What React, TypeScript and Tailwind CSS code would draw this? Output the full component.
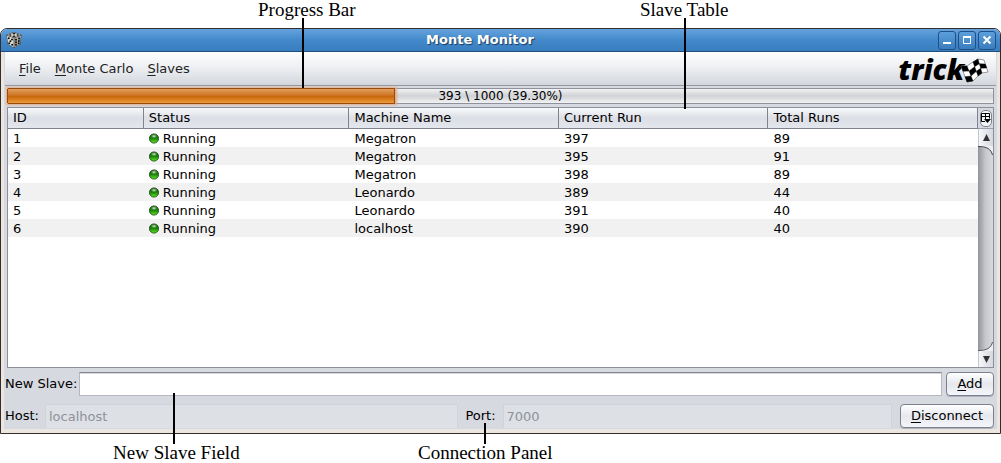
import React from "react";

type Slave = { id: number; status: string; machine: string; current: number; total: number };

const slaves: Slave[] = [
  { id: 1, status: "Running", machine: "Megatron", current: 397, total: 89 },
  { id: 2, status: "Running", machine: "Megatron", current: 395, total: 91 },
  { id: 3, status: "Running", machine: "Megatron", current: 398, total: 89 },
  { id: 4, status: "Running", machine: "Leonardo", current: 389, total: 44 },
  { id: 5, status: "Running", machine: "Leonardo", current: 391, total: 40 },
  { id: 6, status: "Running", machine: "localhost", current: 390, total: 40 },
];

const columns = [
  { name: "ID", width: "w-[14%]" },
  { name: "Status", width: "w-[21.2%]" },
  { name: "Machine Name", width: "w-[21.6%]" },
  { name: "Current Run", width: "w-[21.6%]" },
  { name: "Total Runs", width: "w-[21.6%]" },
];

function Mnemonic({ text }: { text: string }) {
  return (
    <>
      <span className="underline underline-offset-2">{text[0]}</span>
      {text.slice(1)}
    </>
  );
}

function DiceIcon() {
  return (
    <svg viewBox="0 0 16 16" className="h-4 w-4" aria-hidden="true">
      <path d="M0.500 2.800 8 0l7.500 2.800L14.500 12 8 16l-6.500-4z" fill="#33332f" />
      <path d="m1 3 7-2.500L15 3 8 5.500z" fill="#e4e4de" />
      <path d="m1 3.800 6.600 2.300V15.500L2 12z" fill="#deded6" />
      <path d="M15 3.800 8.400 6.100v9.400L14 12z" fill="#aeada5" />
      <g fill="#0c0c0c">
        <ellipse cx="8" cy="1.700" rx="1.600" ry="0.800" />
        <ellipse cx="8" cy="4.200" rx="1.600" ry="0.800" />
        <ellipse cx="4.300" cy="3" rx="1.300" ry="0.700" />
        <ellipse cx="11.700" cy="3" rx="1.300" ry="0.700" />
        <circle cx="2.800" cy="6.300" r="1" />
        <circle cx="6" cy="7.600" r="1" />
        <circle cx="4.400" cy="9.300" r="1" />
        <circle cx="3.200" cy="11.300" r="1" />
        <circle cx="6.100" cy="12.800" r="1" />
        <circle cx="10" cy="7.700" r="1" />
        <circle cx="13.100" cy="6.400" r="1" />
        <circle cx="10" cy="10.200" r="1" />
        <circle cx="12.900" cy="8.900" r="1" />
        <circle cx="10" cy="12.800" r="1" />
        <circle cx="12.700" cy="11.300" r="1" />
      </g>
    </svg>
  );
}

const flagTop = [[1, 8], [7, 8], [13, 4], [18, 1], [24, 2]];
const flagBottom = [[7, 24], [13, 23], [18, 18], [22, 15], [28, 14]];

function flagPoint(column: number, row: number) {
  const [x1, y1] = flagTop[column];
  const [x2, y2] = flagBottom[column];
  return `${x1 + ((x2 - x1) * row) / 3},${y1 + ((y2 - y1) * row) / 3}`;
}

function CheckeredFlag() {
  const cells = [0, 1, 2, 3].flatMap((column) => [0, 1, 2].map((row) => [column, row]));
  return (
    <svg viewBox="0 0 29 26" className="-ml-1 mt-1 h-[26px] w-[29px]" aria-hidden="true">
      <polygon
        points={[...flagTop, ...[...flagBottom].reverse()].map((point) => point.join(",")).join(" ")}
        fill="#fff"
        stroke="#999"
        strokeWidth="1"
        strokeLinejoin="round"
      />
      {cells
        .filter(([column, row]) => (column + row) % 2 === 0)
        .map(([column, row]) => (
          <polygon
            key={`${column}-${row}`}
            points={[
              flagPoint(column, row),
              flagPoint(column + 1, row),
              flagPoint(column + 1, row + 1),
              flagPoint(column, row + 1),
            ].join(" ")}
            stroke="#000"
            strokeWidth="0.400"
          />
        ))}
    </svg>
  );
}

function StatusLight() {
  return (
    <svg viewBox="0 0 10 11" className="h-[11px] w-[10px]" aria-hidden="true">
      <defs>
        <linearGradient id="light" x1="0" y1="0" x2="0" y2="1">
          <stop offset="0" stopColor="#2c6a24" />
          <stop offset="0.450" stopColor="#1a7a0a" />
          <stop offset="1" stopColor="#5cf020" />
        </linearGradient>
        <radialGradient id="glow">
          <stop offset="0" stopColor="#e4f6de" />
          <stop offset="1" stopColor="#6fb060" stopOpacity="0" />
        </radialGradient>
      </defs>
      <circle cx="5" cy="5.500" r="4.600" fill="url(#light)" stroke="#0f3d09" strokeWidth="0.800" />
      <ellipse cx="5" cy="3.200" rx="3.400" ry="2.200" fill="url(#glow)" />
    </svg>
  );
}

function TitleButton({ label, children }: { label: string; children: React.ReactNode }) {
  return (
    <button
      type="button"
      aria-label={label}
      className="flex h-[19px] w-[18px] items-center justify-center rounded-[3px] border border-[#1f4f85] bg-linear-to-b from-[#5c9fdc] to-[#3a7dbf]"
    >
      <svg viewBox="0 0 10 10" className="h-[10px] w-[10px]" fill="none" stroke="#fff" aria-hidden="true">
        {children}
      </svg>
    </button>
  );
}

const pushButton =
  "h-6 rounded-[4px] border border-[#7d818c] bg-linear-to-b from-white via-[#e6e8ee] to-[#f4f6fb] text-[13px] leading-4 shadow-[0_1px_0_#aeb2bc]";

const disabledField =
  "h-6 min-w-0 border border-[#d0d4da] border-b-[#dfe2e7] bg-[#dde0e5] px-[3px] text-[13px] text-[#8f9298]";

const cell = "px-[5px] pt-px pb-0 leading-[17px]";

function Callout({ label, place, line }: { label: string; place: string; line: string }) {
  return (
    <>
      <span className={`absolute font-['Liberation_Serif','Noto_Serif',serif] text-[19px] leading-5 whitespace-nowrap ${place}`}>
        {label}
      </span>
      <span className={`absolute w-0.5 bg-black ${line}`} />
    </>
  );
}

export default function App() {
  const done = 393;
  const runs = 1000;
  const percent = (done / runs) * 100;

  return (
    <div className="relative bg-white pt-7 pb-[29px] font-['DejaVu_Sans',sans-serif] text-[13px] text-black">
      <main className="overflow-hidden rounded-t-[7px] border border-[#332d2c] bg-[#ebe6df]">
        <header className="flex h-[23px] items-center border-b border-[#204e7e] bg-linear-to-b from-[#65a3dc] via-[#4389cb] to-[#397ebe] pr-1 pl-[5px]">
          <DiceIcon />
          <h1 className="flex-1 text-center text-[13px] leading-5 font-bold text-white [text-shadow:1px_1px_1px_#173b63]">
            Monte Monitor
          </h1>
          <div className="flex gap-0.5">
            <TitleButton label="Minimize">
              <path d="M1 8h8" strokeWidth="2" />
            </TitleButton>
            <TitleButton label="Maximize">
              <path d="M1.500 2.500h7v6h-7z" />
              <path d="M1 2h8" strokeWidth="2" />
            </TitleButton>
            <TitleButton label="Close">
              <path d="m1.500 1.500 7 7m0-7-7 7" strokeWidth="2" />
            </TitleButton>
          </div>
        </header>

        <div className="mx-[3px] mb-1 bg-[#d6d9e0] px-px pb-px">
          <div className="flex h-[34px] items-center justify-between border-b border-[#9297a1] bg-linear-to-b from-white via-[#eceef1] to-[#d3d6dd] pl-3.5">
            <nav className="flex gap-3.5 text-[#222]">
              {["File", "Monte Carlo", "Slaves"].map((item) => (
                <button key={item} type="button">
                  <Mnemonic text={item} />
                </button>
              ))}
            </nav>
            <div className="flex items-center pr-[7px]">
              <span className="font-['Open_Sans',sans-serif] text-[28px] leading-6 font-extrabold italic">trick</span>
              <CheckeredFlag />
            </div>
          </div>

          <div
            role="progressbar"
            aria-label="Progress"
            aria-valuenow={done}
            aria-valuemax={runs}
            className="relative mx-0.5 mt-0.5 h-4 border border-[#8e929c] bg-linear-to-b from-[#f2f2f4] via-[#d0d2d6] to-[#f2f2f3]"
          >
            <div
              className="h-full border-r border-[#994a0c] bg-linear-to-b from-[#e0a05a] from-0% via-[#c9680a] via-55% to-[#ee9b38] shadow-[-1px_0_0_#994a0c,0_-1px_0_#994a0c,0_1px_0_#994a0c,0_0_2px_2px_#dfad8b]"
              style={{ width: `${percent}%` }}
            />
            <span className="absolute inset-0 text-center text-[12px] leading-[14px]">
              {done} \ {runs} ({percent.toFixed(2)}%)
            </span>
          </div>

          <section className="mx-0.5 mt-[3px] flex border border-[#8b909b] bg-white">
            <div className="min-h-[259px] min-w-0 flex-1">
              <table className="w-full table-fixed border-separate border-spacing-0 text-left">
                <thead>
                  <tr className="h-[21px]">
                    {columns.map((column) => (
                      <th
                        key={column.name}
                        scope="col"
                        className={`${column.width} border-r border-b border-[#7e838e] bg-linear-to-b from-[#f8f9fb] via-[#dcdfe5] to-[#e3e6ec] px-[5px] py-0 leading-4 font-normal`}
                      >
                        {column.name}
                      </th>
                    ))}
                  </tr>
                </thead>
                <tbody>
                  {slaves.map((slave) => (
                    <tr key={slave.id} className="h-[18px] even:bg-[#f1f1f1]">
                      <td className={cell}>{slave.id}</td>
                      <td className={cell}>
                        <span className="flex items-center gap-1">
                          <StatusLight />
                          {slave.status}
                        </span>
                      </td>
                      <td className={cell}>{slave.machine}</td>
                      <td className={cell}>{slave.current}</td>
                      <td className={cell}>{slave.total}</td>
                    </tr>
                  ))}
                </tbody>
              </table>
            </div>
            <div className="flex w-[15px] flex-col bg-[#d6d9e0]">
              <div className="flex h-[21px] items-center justify-center border-b border-[#9ca1ab]">
                <button type="button" aria-label="Choose columns" className="flex h-[17px] w-[12px] items-center justify-center rounded-[5px] border border-[#7d818c] bg-[#f4f5f8]">
                  <svg viewBox="0 0 11 12" className="h-3 w-[11px] shrink-0" fill="none" stroke="#000" aria-hidden="true">
                    <path d="M5 9.500H1.500v-8h8v5M1 4.500h9M5.500 1v6" />
                    <path d="M4 7h7l-3.500 4z" fill="#000" stroke="none" />
                  </svg>
                </button>
              </div>
              <button type="button" aria-label="Scroll up" className="flex h-[17px] items-center justify-center border-l border-[#c3c6cc] bg-linear-to-r from-[#f6f7f9] to-[#d5d8de]">
                <svg viewBox="0 0 7 7" className="h-[7px] w-[7px]" aria-hidden="true"><path d="M3.500 0 7 7H0z" fill="#333" /></svg>
              </button>
              <div className="relative flex-1 bg-linear-to-r from-[#92949b] via-[#c5c7cc] to-[#d8dade]">
                <svg viewBox="0 0 15 9" className="absolute top-0 h-[9px] w-full" aria-hidden="true">
                  <path d="M0 0h15v9C13 3 9 1 0 1z" fill="#edeff2" />
                  <path d="M0 .5C9 .5 13 3 14.500 9" fill="none" stroke="#3f4146" />
                </svg>
                <svg viewBox="0 0 15 9" className="absolute bottom-0 h-[9px] w-full" aria-hidden="true">
                  <path d="M0 9h15V0C13 6 9 8 0 8z" fill="#edeff2" />
                  <path d="M0 8.500C9 8.500 13 6 14.500 0" fill="none" stroke="#55575c" />
                </svg>
              </div>
              <button type="button" aria-label="Scroll down" className="flex h-4 items-center justify-center border-l border-[#c3c6cc] bg-linear-to-r from-[#f6f7f9] to-[#d5d8de]">
                <svg viewBox="0 0 7 7" className="h-[7px] w-[7px]" aria-hidden="true"><path d="M3.500 7 7 0H0z" fill="#333" /></svg>
              </button>
            </div>
          </section>

          <form className="mt-1 flex items-center pr-0.5" onSubmit={(event) => event.preventDefault()}>
            <label htmlFor="new-slave" className="pr-0.5 whitespace-nowrap">New Slave:</label>
            <input id="new-slave" className="h-6 min-w-0 flex-1 border border-[#b5b8be] border-t-[#85888e] bg-white px-1 shadow-[inset_0_1px_0_#d5d7da]" />
            <button type="submit" className={`ml-1 w-12 ${pushButton}`}><Mnemonic text="Add" /></button>
          </form>

          <form className="mt-2 flex items-center pr-0.5" onSubmit={(event) => event.preventDefault()}>
            <label htmlFor="host" className="pr-1.5">Host:</label>
            <input id="host" disabled defaultValue="localhost" className={`w-[41.8%] ${disabledField}`} />
            <label htmlFor="port" className="px-[7px]">Port:</label>
            <input id="port" disabled defaultValue="7000" className={`flex-1 ${disabledField}`} />
            <button type="submit" className={`ml-2 w-[94px] ${pushButton}`}><Mnemonic text="Disconnect" /></button>
          </form>
        </div>
      </main>

      <Callout label="Progress Bar" place="top-0 left-[258px]" line="top-[18px] left-[302px] h-[70px]" />
      <Callout label="Slave Table" place="top-0 left-[640px]" line="top-[18px] left-[684px] h-[91px]" />
      <Callout label="New Slave Field" place="bottom-0 left-[113px]" line="bottom-[19px] left-[173px] h-[51px]" />
      <Callout label="Connection Panel" place="bottom-0 left-[418px]" line="bottom-[19px] left-[484px] h-[21px]" />
    </div>
  );
}
